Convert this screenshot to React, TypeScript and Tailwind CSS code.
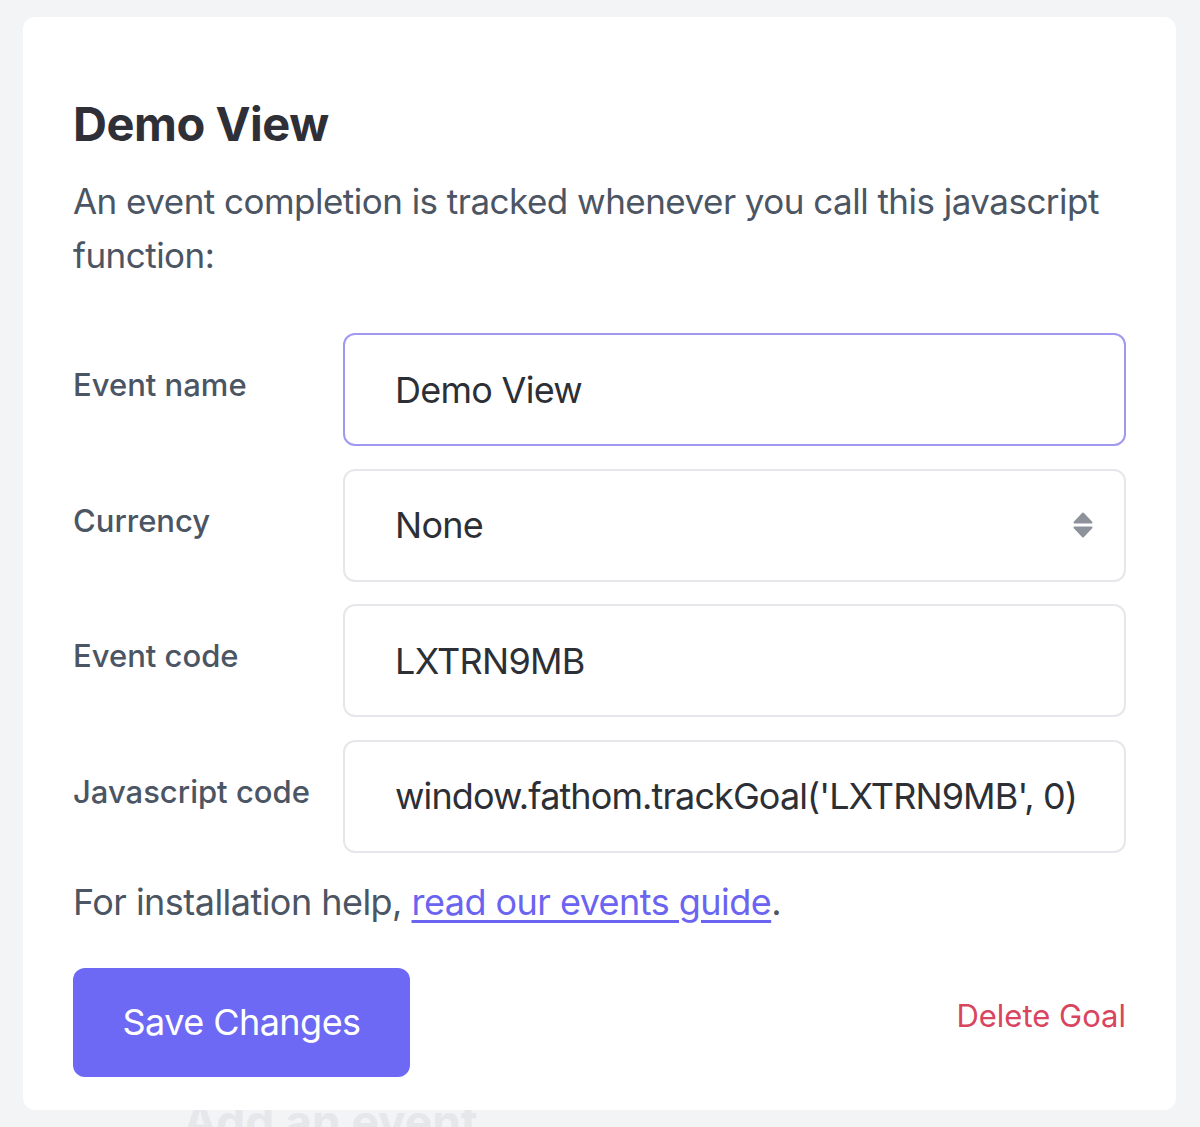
import React from "react";

const fields = [
    { label: "Event name", value: "Demo View", focused: true },
    { label: "Currency", value: "None", select: true },
    { label: "Event code", value: "LXTRN9MB" },
    { label: "Javascript code", value: "window.fathom.trackGoal('LXTRN9MB', 0)", tight: true },
];

function SelectArrows() {
    return (
        <svg width="20" height="26" viewBox="0 0 20 26" className="shrink-0">
            <path d="M10 1.5 L18.5 10.5 L1.5 10.5 Z" fill="#8e939b" stroke="#8e939b" strokeWidth="2" strokeLinejoin="round" />
            <path d="M1.5 15.5 L18.5 15.5 L10 24.5 Z" fill="#8e939b" stroke="#8e939b" strokeWidth="2" strokeLinejoin="round" />
        </svg>
    );
}

export default function App() {
    return (
        <div className="relative h-[1127px] overflow-hidden bg-[#f3f4f6] font-['Inter',sans-serif]">
            {/* page content behind the modal */}
            <p className="absolute left-[183px] top-[1098px] text-[46px] font-bold leading-none text-[#e6e7ea]">
                Add an event
            </p>

            <div className="relative ml-[23px] mt-[17px] w-[1153px] h-[1093px] rounded-[12px] bg-white px-[50px] pt-[83px]">
                <h2 className="text-[47px] font-bold leading-none tracking-[-0.01em] text-[#2f3037]">Demo View</h2>
                <p className="mt-[27px] text-[35px] leading-[54px] tracking-[-0.015em] text-[#4b5563]">
                    An event completion is tracked whenever you call this javascript function:
                </p>

                <div className="mt-[51px] flex flex-col gap-[22.5px]">
                    {fields.map((f) => (
                        <div key={f.label} className="grid grid-cols-[270px_1fr] items-start">
                            <label className="pt-[36px] text-[31px] font-medium leading-none text-[#4b5563]">{f.label}</label>
                            {f.select ? (
                                <div className="flex h-[113px] items-center justify-between rounded-[12px] border-2 border-[#e5e7eb] bg-white pl-[50px] pr-[31px] text-[36px] tracking-[-0.02em] text-[#2d2f36]">
                                    <span>{f.value}</span>
                                    <SelectArrows />
                                </div>
                            ) : (
                                <input
                                    readOnly
                                    value={f.value}
                                    className={
                                        f.focused
                                            ? "h-[113px] w-full rounded-[12px] border-2 border-[#9f99f1] bg-white px-[50px] text-[36px] tracking-[-0.02em] text-[#2d2f36] outline-none"
                                            : f.tight
                                              ? "h-[113px] w-full rounded-[12px] border-2 border-[#e5e7eb] bg-white pl-[50px] pr-[48px] text-[36px] tracking-[-0.025em] text-[#2d2f36] outline-none"
                                              : "h-[113px] w-full rounded-[12px] border-2 border-[#e5e7eb] bg-white px-[50px] text-[36px] tracking-[-0.02em] text-[#2d2f36] outline-none"
                                    }
                                />
                            )}
                        </div>
                    ))}
                </div>

                <p className="mt-[31px] text-[36px] leading-none tracking-[-0.015em] text-[#4b5563]">
                    For installation help,{" "}
                    <a href="#" className="text-[#6b64f0] underline decoration-[3px] underline-offset-[5px]">
                        read our events guide
                    </a>
                    .
                </p>

                <div className="mt-[48px] flex items-start justify-between">
                    <button className="h-[109px] w-[337px] rounded-[12px] bg-[#6d69f5] text-[36px] tracking-[-0.015em] text-white">
                        Save Changes
                    </button>
                    <a href="#" className="mt-[32px] text-[31px] leading-none text-[#d9455f]">
                        Delete Goal
                    </a>
                </div>
            </div>
        </div>
    );
}
